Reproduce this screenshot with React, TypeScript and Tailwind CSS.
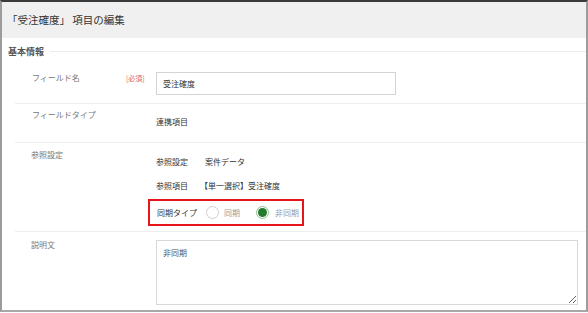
import React from "react";

const font = { fontFamily: '"Noto Sans CJK JP", "Noto Sans", sans-serif' };

export default function App() {
  return (
    <div className="w-[588px] h-[313px] bg-white overflow-hidden" style={font}>
      <div className="w-[588px] h-[312px] border-t-2 border-t-[#3a3a3a] border-x-2 border-b-2 border-x-[#9c9c9c] border-b-[#a8a8a8] flex flex-col overflow-hidden">
        {/* header */}
        <div className="h-[36px] shrink-0 bg-[#f0f0f0] flex items-center pl-[5px] text-[10.5px] text-[#333] leading-none">
          「受注確度」 項目の編集
        </div>
        {/* section title */}
        <div className="h-[26px] shrink-0 flex items-center pl-[6px]">
          <span className="text-[9px] font-bold text-[#555] leading-none">基本情報</span>
          <div className="flex-1 h-px bg-[#ececec] ml-[6px]" />
        </div>
        <div className="ml-[13px] flex flex-col">
          {/* row 1 */}
          <div className="h-[39px] flex items-start">
            <div className="w-[141px] flex items-start pl-[17px] pt-[8px]">
              <span className="w-[94px] text-[8px] leading-[12px] text-[#777]">フィールド名</span>
              <span className="text-[7px] leading-[12px] text-[#e06060]">[必須]</span>
            </div>
            <div className="mt-[8px] w-[240px] h-[23px] border border-[#d4d4d4] flex items-center pl-[6px] text-[8px] text-[#333]">
              受注確度
            </div>
          </div>
          {/* row 2 */}
          <div className="h-[39px] border-t border-[#eeeeee] flex items-start">
            <div className="w-[141px] pl-[17px] mt-[5px] text-[8px] leading-[12px] text-[#777]">フィールドタイプ</div>
            <div className="mt-[12px] text-[8px] leading-[12px] text-[#333]">連携項目</div>
          </div>
          {/* row 3 */}
          <div className="h-[89px] border-t border-[#eeeeee] flex items-start">
            <div className="w-[141px] pl-[16px] mt-[6px] text-[8px] leading-[12px] text-[#777]">参照設定</div>
            <div className="flex flex-col mt-[13px]">
              <div className="flex text-[8px] leading-[12px] text-[#333]">
                <span className="w-[49px]">参照設定</span>
                <span>案件データ</span>
              </div>
              <div className="flex text-[8px] leading-[12px] text-[#333] mt-[12px]">
                <span className="w-[44px]">参照項目</span>
                <span>【単一選択】受注確度</span>
              </div>
              <div className="mt-[7px] ml-[-8px] w-[156px] h-[27px] border-2 border-[#e8141b] flex items-center pl-[7px] text-[8px] leading-[12px]">
                <span className="text-[#333]">同期タイプ</span>
                <span className="ml-[9px] w-[13px] h-[13px] rounded-full border border-[#d0d0d0] bg-white" />
                <span className="ml-[5px] text-[#999]">同期</span>
                <span className="ml-[16px] w-[13px] h-[13px] rounded-full border border-[#8fbf93] bg-white flex items-center justify-center">
                  <span className="w-[9px] h-[9px] rounded-full bg-[#237a2b]" />
                </span>
                <span className="ml-[6px] text-[#999]">非同期</span>
              </div>
            </div>
          </div>
          {/* row 4 */}
          <div className="border-t border-[#eeeeee] flex items-start">
            <div className="w-[141px] pl-[16px] mt-[7px] text-[8px] leading-[12px] text-[#777]">説明文</div>
            <textarea
              readOnly
              defaultValue="非同期"
              className="mt-[8px] w-[422px] h-[65px] border border-[#d8d8d8] px-[6px] py-[6px] text-[8px] leading-[12px] text-[#555] outline-none resize"
              style={font}
            />
          </div>
        </div>
      </div>
    </div>
  );
}
